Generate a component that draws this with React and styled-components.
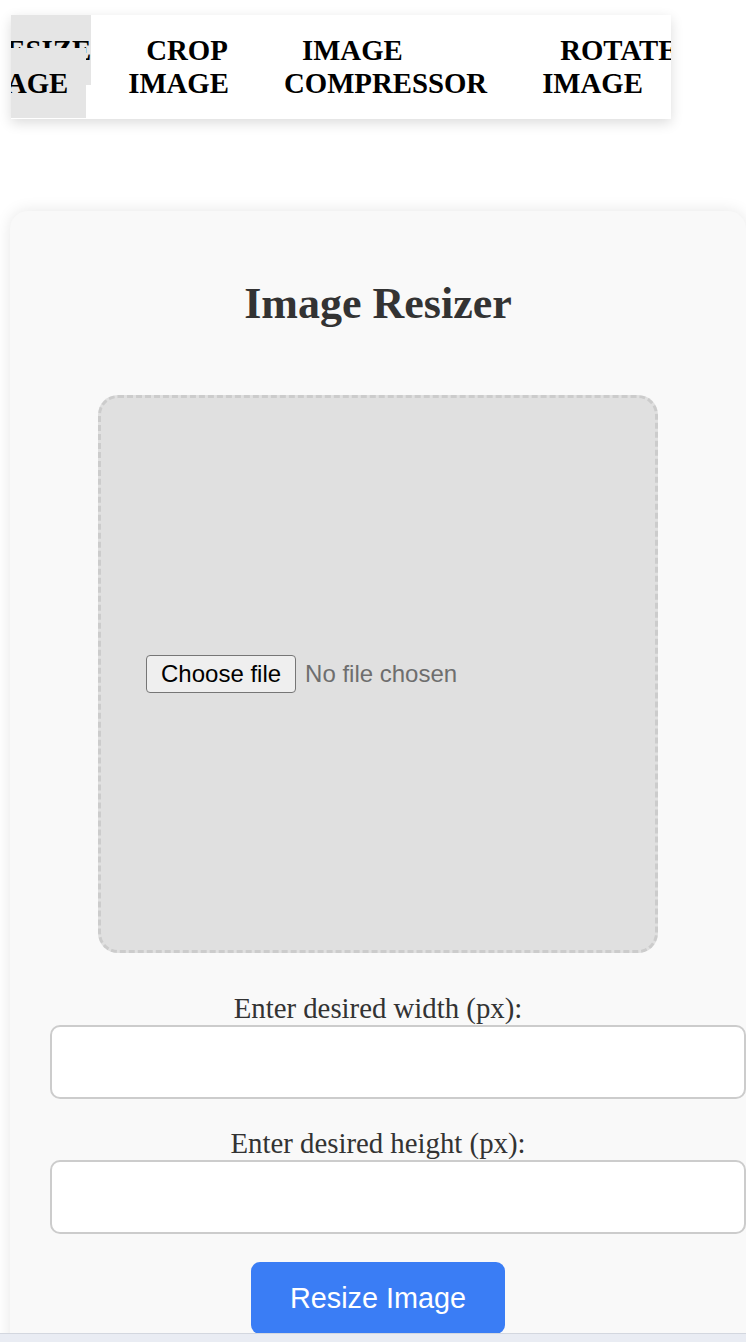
import React from "react";
import styled, { createGlobalStyle } from "styled-components";

const GlobalStyle = createGlobalStyle`
  html, body {
    margin: 0;
    padding: 0;
    background: #ffffff;
  }
  body {
    font-family: "Liberation Serif", "Times New Roman", serif;
    overflow-x: hidden;
  }
`;

const tabs = ["RESIZE IMAGE", "CROP IMAGE", "IMAGE COMPRESSOR", "ROTATE IMAGE"];

export default function App() {
  return (
    <>
      <GlobalStyle />
      <Page>
        <NavBar>
          {tabs.map((t, i) => (
            <NavItem key={t}>
              <NavLink href="#" $active={i === 0}>
                {t}
              </NavLink>
            </NavItem>
          ))}
        </NavBar>

        <Card>
          <Title>Image Resizer</Title>

          <DropZone>
            <FileLabel>
              <HiddenInput type="file" accept="image/*" />
              <FileButton>Choose file</FileButton>
            </FileLabel>
            <FileName>No file chosen</FileName>
          </DropZone>

          <Field>
            <FieldLabel htmlFor="w">Enter desired width (px):</FieldLabel>
            <TextInput id="w" type="number" />
          </Field>

          <Field>
            <FieldLabel htmlFor="h">Enter desired height (px):</FieldLabel>
            <TextInput id="h" type="number" />
          </Field>

          <ResizeButton>Resize Image</ResizeButton>
        </Card>
      </Page>
      <BottomBar />
    </>
  );
}

const Page = styled.div`
  padding-top: 15px;
`;

const NavBar = styled.ul`
  display: flex;
  justify-content: center;
  list-style: none;
  margin: 0 0 0 11px;
  padding: 19px 0;
  width: 660px;
  background: #fff;
  overflow: hidden;
  box-shadow: 0 4px 12px rgba(0, 0, 0, 0.14);
`;

const NavItem = styled.li`
  margin-right: 37px;
`;

const NavLink = styled.a`
  padding: 19px 18px;
  font-family: "Liberation Serif", "Times New Roman", serif;
  font-weight: bold;
  font-size: 28.8px;
  color: #000;
  text-decoration: none;
  background: ${(p) => (p.$active ? "#e5e5e5" : "transparent")};
`;

const Card = styled.div`
  box-sizing: border-box;
  width: 736px;
  margin: 92px 0 0 10px;
  padding: 36px 40px 40px;
  background: #f9f9f9;
  border-radius: 18px;
  box-shadow: 0 0 16px rgba(0, 0, 0, 0.1);
  text-align: center;
`;

const Title = styled.h2`
  margin: 31px 0 66px;
  font-size: 44px;
  font-weight: bold;
  color: #333;
`;

const DropZone = styled.div`
  box-sizing: border-box;
  display: flex;
  align-items: center;
  width: 560px;
  height: 558px;
  margin: 0 auto 39px;
  padding: 0 45px;
  background: #e0e0e0;
  border: 3px dashed #cccccc;
  border-radius: 20px;
`;

const FileLabel = styled.label`
  display: inline-flex;
  cursor: pointer;
`;

const HiddenInput = styled.input`
  position: absolute;
  width: 1px;
  height: 1px;
  opacity: 0;
  pointer-events: none;
`;

const FileButton = styled.span`
  padding: 4px 14px;
  font-family: "Liberation Sans", Arial, sans-serif;
  font-size: 24px;
  color: #000;
  background: #efefef;
  border: 1px solid #767676;
  border-radius: 4px;
`;

const FileName = styled.span`
  margin-left: 9px;
  font-family: "Liberation Sans", Arial, sans-serif;
  font-size: 24px;
  color: #6e6e6e;
`;

const Field = styled.div`
  margin-bottom: 28px;
  text-align: center;
`;

const FieldLabel = styled.label`
  display: block;
  font-size: 28.8px;
  color: #333;
`;

const TextInput = styled.input`
  display: block;
  width: 100%;
  padding: 18px;
  margin: 0;
  font-family: "Liberation Sans", Arial, sans-serif;
  font-size: 28.8px;
  line-height: 34px;
  height: 34px;
  color: #333;
  background: #fff;
  border: 2px solid #cccccc;
  border-radius: 10px;
  outline: none;
  -moz-appearance: textfield;
  &::-webkit-outer-spin-button,
  &::-webkit-inner-spin-button {
    -webkit-appearance: none;
    margin: 0;
  }
`;

const ResizeButton = styled.button`
  display: block;
  margin: 0 auto;
  padding: 19.5px 39px;
  font-family: "Liberation Sans", Arial, sans-serif;
  font-size: 28.8px;
  color: #fff;
  background: #3a7df5;
  border: none;
  border-radius: 9px;
  cursor: pointer;
`;

const BottomBar = styled.div`
  position: fixed;
  left: 0;
  right: 0;
  bottom: 0;
  height: 8px;
  background: #e9ecf3;
  border-top: 1px solid #d3d7df;
`;
